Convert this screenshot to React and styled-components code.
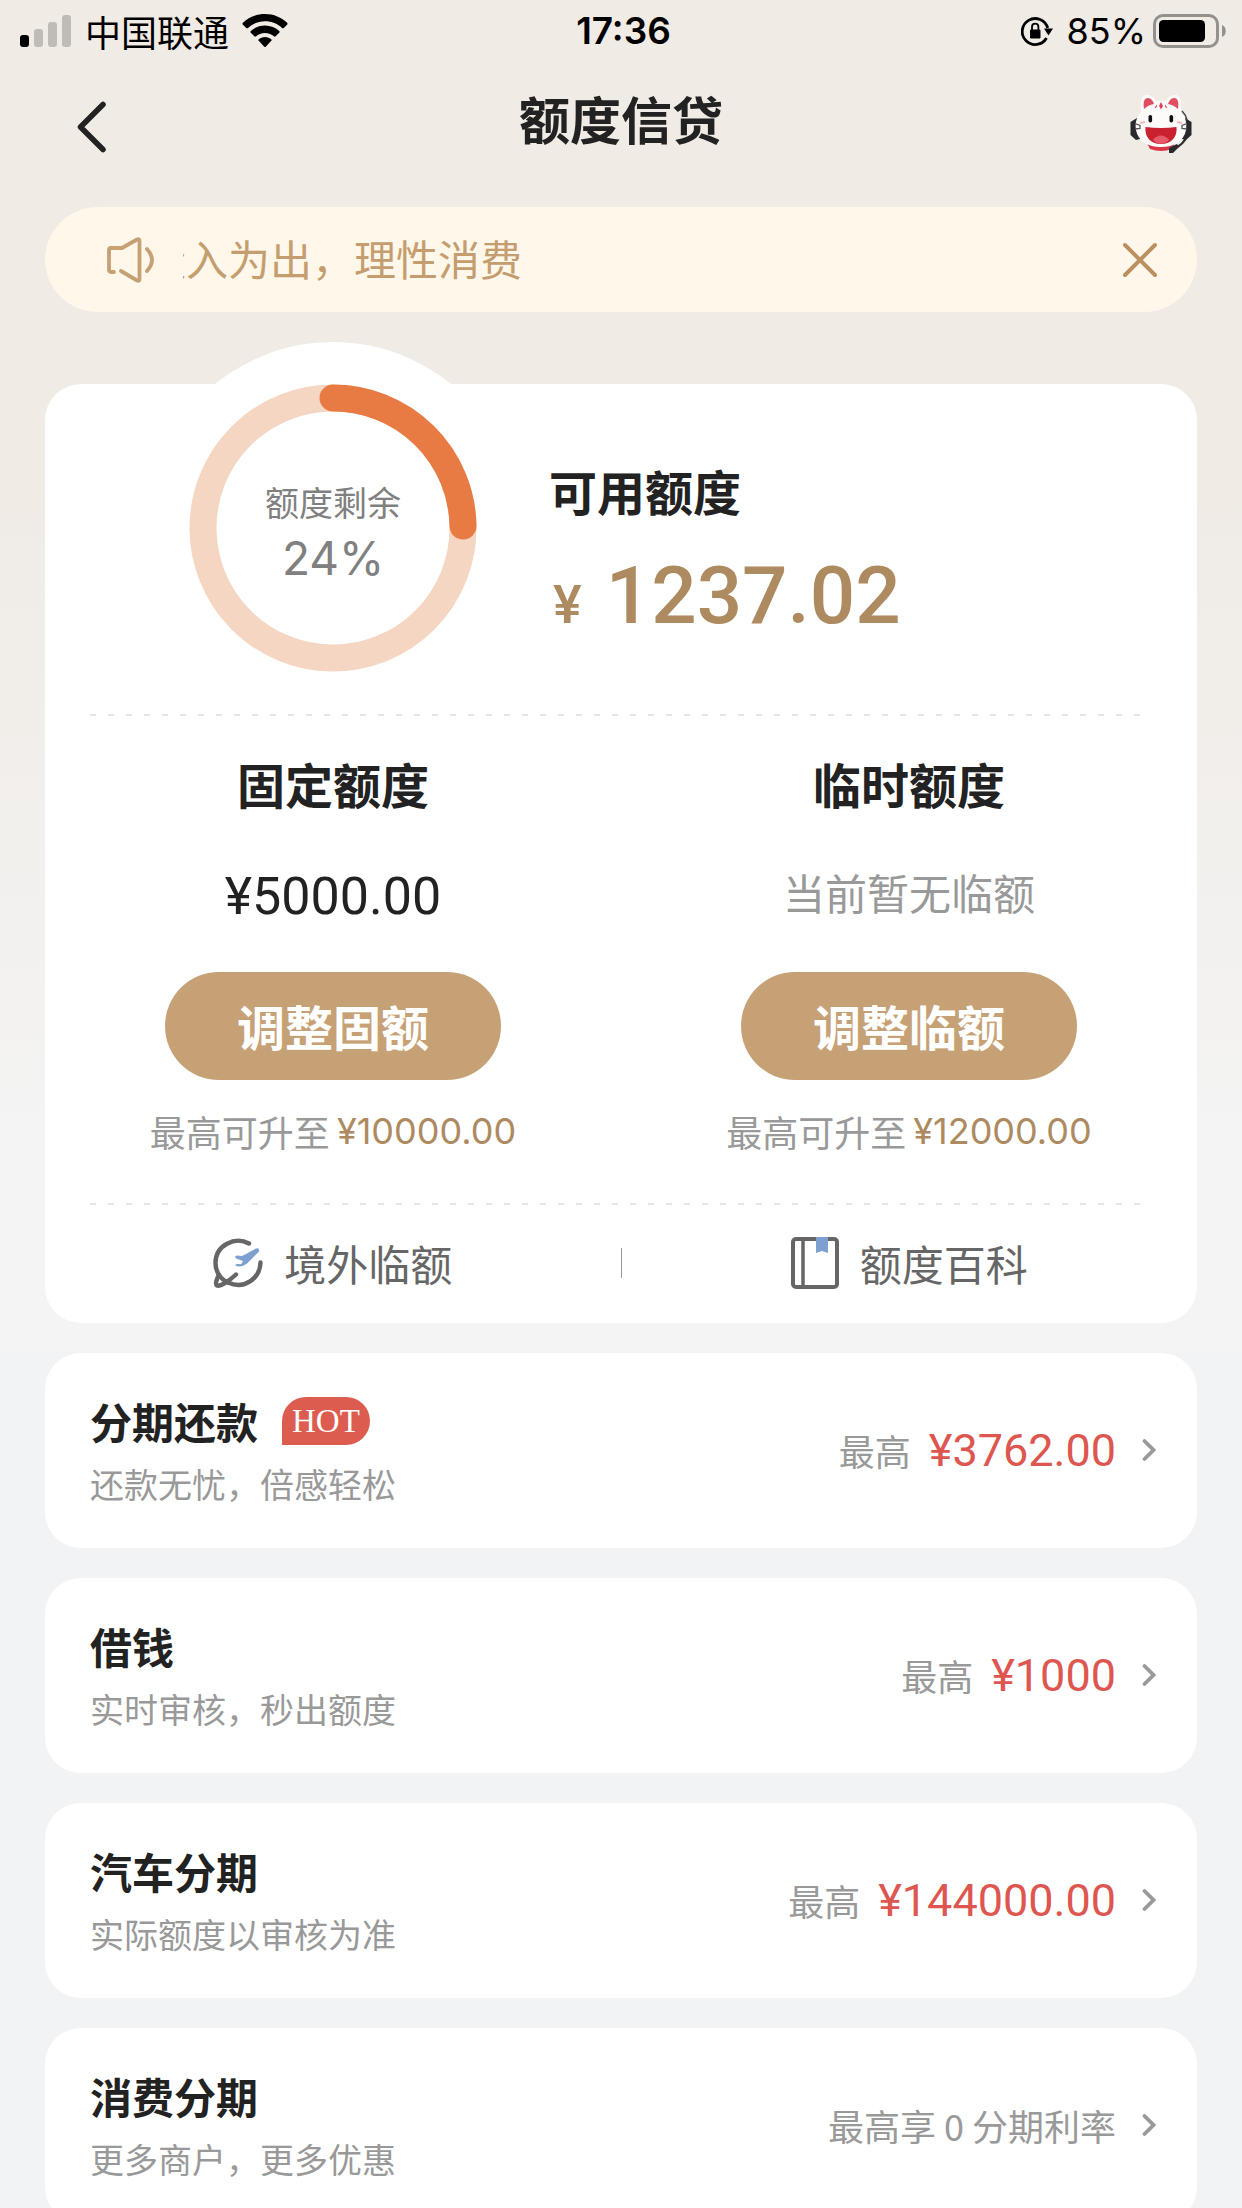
import React, { useState } from "react";
import styled, { createGlobalStyle } from "styled-components";

const PRODUCTS = [
  {
    id: "repay",
    title: "分期还款",
    desc: "还款无忧，倍感轻松",
    hot: true,
    prefix: "最高",
    amount: "¥3762.00",
  },
  {
    id: "loan",
    title: "借钱",
    desc: "实时审核，秒出额度",
    prefix: "最高",
    amount: "¥1000",
  },
  {
    id: "car",
    title: "汽车分期",
    desc: "实际额度以审核为准",
    prefix: "最高",
    amount: "¥144000.00",
  },
  {
    id: "shopping",
    title: "消费分期",
    desc: "更多商户，更多优惠",
    prefix: "最高享 0 分期利率",
  },
];

const LIMITS = [
  {
    id: "fixed",
    title: "固定额度",
    value: "¥5000.00",
    action: "调整固额",
    max: "¥10000.00",
  },
  {
    id: "temp",
    title: "临时额度",
    empty: "当前暂无临额",
    action: "调整临额",
    max: "¥12000.00",
  },
];

const SignalIcon = () => (
  <svg width="52" height="32" viewBox="0 0 52 32">
    <rect x="0" y="20" width="9" height="12" rx="3" fill="#000" />
    <rect x="14" y="14" width="9" height="18" rx="3" fill="#bfbbb6" />
    <rect x="28" y="7" width="9" height="25" rx="3" fill="#bfbbb6" />
    <rect x="42" y="0" width="9" height="32" rx="3" fill="#bfbbb6" />
  </svg>
);

const WifiIcon = () => (
  <svg width="46" height="34" viewBox="0 0 46 34">
    <path d="M23 0C14.3 0 6.400 3.400.6 9l-.1 1.200 4 4 1.200 0C10.200 9.900 16.300 7.300 23 7.300s12.800 2.600 17.300 6.900l1.200 0 4-4-.1-1.200C39.600 3.400 31.700 0 23 0z" />
    <path d="M23 11.500c-5.600 0-10.700 2.200-14.500 5.700l0 1.200 4.100 4.100 1.200 0c2.500-2.200 5.700-3.600 9.200-3.600s6.700 1.400 9.200 3.600l1.200 0 4.100-4.100 0-1.200c-3.800-3.500-8.900-5.700-14.500-5.700z" />
    <path d="M23 23c-2.500 0-4.700.9-6.500 2.400l0 1.200 6 6.400 1 0 6-6.400 0-1.200C27.700 23.900 25.500 23 23 23z" />
  </svg>
);

const LockIcon = () => (
  <svg width="32" height="34" viewBox="0 0 32 34" fill="none">
    <path d="M25.500 24A13 13 0 1 1 26.700 14" stroke="#000" strokeWidth="2.800" />
    <path d="M23 14.500h9l-4.500 7z" fill="#000" />
    <rect x="9" y="15.500" width="10.500" height="9" rx="1.200" fill="#000" />
    <path d="M11 16v-3.100a3.200 3.200 0 0 1 6.400 0V16" stroke="#000" strokeWidth="1.800" />
  </svg>
);

const BatteryIcon = () => (
  <svg width="74" height="34" viewBox="0 0 74 34" fill="none">
    <rect x="1.500" y="1.500" width="63" height="31" rx="8.500" stroke="#94908c" strokeWidth="3" />
    <rect x="6" y="6" width="46" height="22" rx="4.500" fill="#000" />
    <path d="M69 11c5 1.500 5 10.500 0 12z" fill="#94908c" />
  </svg>
);

const BackIcon = () => (
  <svg width="30" height="52" viewBox="0 0 30 52" fill="none">
    <path
      d="M26 3.500L3.500 26 26 48.500"
      stroke="#222"
      strokeWidth="5.500"
      strokeLinecap="round"
      strokeLinejoin="round"
    />
  </svg>
);

const MascotIcon = () => (
  <svg width="64" height="60" viewBox="0 0 64 60">
    <path d="M8 24L1.500 28v13L7 46l4-1z" fill="#292a2d" />
    <path d="M56 24l6.500 4v13L57 46l-4-1z" fill="#292a2d" />
    <path d="M53 17q4 4 5 9" fill="none" stroke="#444" strokeWidth="1.500" />
    <path d="M18 49h28l-3 6q-11 4-22 0z" fill="#d93649" />
    <path
      d="M12 18C11 8 12 1 18 1c4 0 7 2 9 6q5-1 10 0c2-4 5-6 9-6 6 0 7 7 6 17 5 6 6 11 5 18-2 11-12 17-25 17S9 47 7 36c-1-7 0-12 5-18z"
      fill="#fdfbfa"
    />
    <path d="M15 15c-1-7 0-11 4-11 3 0 5 3 6 6q-6 1-10 5z" fill="#e04f61" />
    <path d="M49 15c1-7 0-11-4-11-3 0-5 3-6 6q6 1 10 5z" fill="#e04f61" />
    <path
      d="M32 8l2 4-2 3.500-2-3.500zM27.500 10.500l.5 2.500-2.500 1.500zM36.500 10.500l-.5 2.500 2.500 1.500z"
      fill="#df4254"
    />
    <rect x="19.500" y="21" width="3.600" height="7.500" rx="1.800" fill="#111" />
    <rect x="40.500" y="21" width="3.600" height="7.500" rx="1.800" fill="#111" />
    <path d="M11 29l5-1M48 28l5 1" stroke="#f6b6bc" strokeWidth="2" />
    <path d="M6 29.500l5 2v3l-5 .5M58 29.500l-5 2v3l5 .5" fill="none" stroke="#555" strokeWidth="1.300" />
    <path d="M16.500 33q15.500 2 31 0c1 10-5 17-15.500 17s-16.500-7-15.500-17z" fill="#c9222e" />
    <path d="M24 46c4-6 12-6 16 0-5 5-11 5-16 0z" fill="#e5596a" />
    <path d="M58 42C55 49 51 52 46 54" fill="none" stroke="#292a2d" strokeWidth="2" />
    <path d="M40 54l8-4 2 3-6 6h-4z" fill="#292a2d" />
  </svg>
);

const SpeakerIcon = () => (
  <svg width="48" height="46" viewBox="0 0 48 46" fill="none">
    <path
      d="M7 35H4q-2 0-2-2V13q0-2 2-2h11L30 2.500q2.500-1 2.500 1.500v38q0 2.500-2.500 1.500L14 34"
      stroke="#c7a176"
      strokeWidth="3.800"
      strokeLinecap="round"
      strokeLinejoin="round"
    />
    <path d="M40 12q10 11 0 22" stroke="#c7a176" strokeWidth="3.800" strokeLinecap="round" />
  </svg>
);

const CloseIcon = () => (
  <svg width="36" height="36" viewBox="0 0 36 36" fill="none">
    <path d="M3 3l30 30M33 3L3 33" stroke="#bb9162" strokeWidth="4" strokeLinecap="round" />
  </svg>
);

const AbroadIcon = () => (
  <svg width="50" height="50" viewBox="0 0 50 50" fill="none">
    <g stroke="#666" strokeWidth="4.400" strokeLinecap="round" strokeLinejoin="round">
      <path d="M36 5.500C22-2 2.500 7 2.500 25c0 5 1.500 9 4 13" />
      <path d="M47.500 24.500C47 40 32 52 15 44.500" />
      <path d="M6 37c-2.500 4-4 9-2 10.500C7 49 16 43 23 36.500" />
      <path d="M6.500 38q3 4 8.500 6.500" />
    </g>
    <path
      d="M33 16l9-5c3-2 5.500 1 3.500 3L34 25.500q-5 4-11 2.500-1.500-1.500 1-2h4.500l1.500-3-7-2.500q-2-2.500 1-3l5 .5z"
      fill="#7ea0d0"
    />
  </svg>
);

const BookIcon = () => (
  <svg width="48" height="52" viewBox="0 0 48 52" fill="none">
    <rect x="2" y="2" width="44" height="48" rx="3" stroke="#666" strokeWidth="4" />
    <path d="M12 2v48" stroke="#666" strokeWidth="3.500" />
    <path d="M25 0h12v16l-6-2-6 2z" fill="#7ea0d0" />
  </svg>
);

const ArrowIcon = () => (
  <svg width="14" height="24" viewBox="0 0 14 24" fill="none">
    <path d="M2.500 3l9 9-9 9" stroke="#999" strokeWidth="3.800" strokeLinecap="round" />
  </svg>
);

const QuotaRing = ({ ratio, label, percent }) => {
  const radius = 130;
  const length = 2 * Math.PI * radius;

  return (
    <RingWrapper>
      <RingSvg viewBox="0 0 372 372">
        <circle cx="186" cy="186" r={radius} stroke="#f5d6c3" />
        <circle
          cx="186"
          cy="186"
          r={radius}
          stroke="#e77b43"
          strokeLinecap="round"
          strokeDasharray={`${length * ratio} ${length}`}
          transform="rotate(-90 186 186)"
        />
      </RingSvg>
      <RingText>
        <RingLabel>{label}</RingLabel>
        <RingValue>{percent}</RingValue>
      </RingText>
    </RingWrapper>
  );
};

const Limit = ({ title, value, empty, action, max }) => (
  <LimitColumn>
    <Heading>{title}</Heading>
    {value ? <LimitValue>{value}</LimitValue> : <LimitEmpty>{empty}</LimitEmpty>}
    <AdjustBtn type="button">{action}</AdjustBtn>
    <LimitHint>
      最高可升至<HintAmount>{max}</HintAmount>
    </LimitHint>
  </LimitColumn>
);

const Product = ({ title, desc, hot, prefix, amount }) => (
  <ProductCard href="#">
    <ProductInfo>
      <ProductTitle>
        {title}
        {hot && <HotTag>HOT</HotTag>}
      </ProductTitle>
      <ProductDesc>{desc}</ProductDesc>
    </ProductInfo>
    <ProductOffer>
      {prefix}
      {amount && <ProductAmount>{amount}</ProductAmount>}
    </ProductOffer>
    <ArrowIcon />
  </ProductCard>
);

const App = () => {
  const [notice, setNotice] = useState(true);

  return (
    <Page>
      <GlobalStyle />
      <StatusBar>
        <StatusGroup>
          <SignalIcon />
          <span>中国联通</span>
          <WifiIcon />
        </StatusGroup>
        <Clock>17:36</Clock>
        <StatusGroup $end>
          <LockIcon />
          <Battery>
            <span>85%</span>
            <BatteryIcon />
          </Battery>
        </StatusGroup>
      </StatusBar>

      <NavBar>
        <BackBtn type="button" aria-label="返回">
          <BackIcon />
        </BackBtn>
        <NavTitle>额度信贷</NavTitle>
        <IconBtn type="button" aria-label="客服">
          <MascotIcon />
        </IconBtn>
      </NavBar>

      <Main>
        {notice && (
          <Notice>
            <SpeakerIcon />
            <Ticker>
              <TickerText $scrolled={39}>量入为出，理性消费</TickerText>
            </Ticker>
            <IconBtn type="button" aria-label="关闭" onClick={() => setNotice(false)}>
              <CloseIcon />
            </IconBtn>
          </Notice>
        )}

        <QuotaCard>
          <Summary>
            <QuotaRing ratio={0.2474} label="额度剩余" percent="24%" />
            <Available>
              <Heading>可用额度</Heading>
              <AvailableAmount>
                <Currency>¥</Currency>1237.02
              </AvailableAmount>
            </Available>
          </Summary>
          <Dashes />
          <Limits>
            {LIMITS.map((item) => (
              <Limit key={item.id} {...item} />
            ))}
          </Limits>
          <Dashes />
          <Shortcuts>
            <Shortcut href="#">
              <AbroadIcon />
              境外临额
            </Shortcut>
            <Divider />
            <Shortcut href="#">
              <BookIcon />
              额度百科
            </Shortcut>
          </Shortcuts>
        </QuotaCard>

        {PRODUCTS.map((item) => (
          <Product key={item.id} {...item} />
        ))}
      </Main>
    </Page>
  );
};

const GlobalStyle = createGlobalStyle`
  * {
    box-sizing: border-box;
  }
  body {
    margin: 0;
    background-color: #f2f3f5;
    font-family: "Noto Sans CJK SC", sans-serif;
    color: #222;
  }
  svg {
    display: block;
    flex-shrink: 0;
  }
  a {
    color: inherit;
    text-decoration: none;
  }
  button {
    padding: 0;
    border: none;
    background: none;
    font-family: inherit;
    cursor: pointer;
  }
`;

const Page = styled.div`
  display: flex;
  flex-direction: column;
  height: 100vh;
  overflow: hidden;
  background: linear-gradient(#f0ebe5 500px, #f4f4f4 1150px, #f4f4f4 1352px, #f2f3f5 1352px);
`;

const StatusBar = styled.header`
  display: grid;
  grid-template-columns: 1fr auto 1fr;
  align-items: center;
  height: 61px;
  padding: 0 15px 0 20px;
  font-size: 36px;
  line-height: 60px;
  color: #000;
`;

const StatusGroup = styled.div`
  display: flex;
  align-items: center;
  justify-content: ${(props) => (props.$end ? "flex-end" : "flex-start")};
  gap: 13px;
`;

const Battery = styled.div`
  display: flex;
  align-items: center;
  gap: 7px;
  font-family: Inter, sans-serif;
`;

const Clock = styled.time`
  font-family: Inter, sans-serif;
  font-size: 37px;
  font-weight: 600;
`;

const NavBar = styled.nav`
  display: grid;
  grid-template-columns: 1fr auto 1fr;
  align-items: center;
  height: 125px;
  padding: 0 49px;
`;

const NavTitle = styled.h1`
  margin: 0;
  padding-bottom: 12px;
  font-size: 51px;
  line-height: 72px;
  font-weight: 600;
`;

const IconBtn = styled.button`
  display: flex;
  justify-self: end;
`;

const BackBtn = styled(IconBtn)`
  justify-self: start;
  padding: 6px 0 0 28px;
`;

const Main = styled.main`
  flex: 1;
  min-height: 0;
  overflow-y: auto;
  scrollbar-width: none;
  display: flex;
  flex-direction: column;
  gap: 30px;
  padding: 21px 45px 30px;

  > * {
    flex-shrink: 0;
  }
`;

const Notice = styled.div`
  display: flex;
  align-items: center;
  height: 105px;
  margin-bottom: 42px;
  padding: 0 39px 0 62px;
  border-radius: 53px;
  background-color: #fff7e9;
  color: #c49e70;
  font-size: 42px;
  line-height: 60px;
`;

const Ticker = styled.div`
  flex: 1;
  margin-left: 28px;
  padding-bottom: 4px;
  overflow: hidden;
  white-space: nowrap;
`;

const TickerText = styled.div`
  margin-left: -${(props) => props.$scrolled}px;
`;

const QuotaCard = styled.section`
  border-radius: 36px;
  background-color: #fff;
`;

const Summary = styled.div`
  display: flex;
  align-items: center;
  gap: 30px;
  margin-top: -42px; /* the ring sticks out above the card */
  padding-left: 102px;
`;

const RingWrapper = styled.div`
  display: grid;
  place-items: center;
  width: 372px;
  height: 372px;
  border-radius: 50%;
  background-color: #fff;

  > * {
    grid-area: 1 / 1;
  }
`;

const RingSvg = styled.svg`
  width: 100%;
  height: 100%;
  fill: none;
  stroke-width: 27px;
`;

const RingText = styled.div`
  padding-top: 12px;
  text-align: center;
  color: #808080;
`;

const RingLabel = styled.div`
  font-size: 34px;
  line-height: 48px;
`;

const RingValue = styled.div`
  font-family: Inter, sans-serif;
  font-size: 46px;
  line-height: 64px;
`;

const Available = styled.div`
  display: flex;
  flex-direction: column;
  gap: 28px;
  padding-top: 56px;
`;

const Heading = styled.h2`
  margin: 0;
  font-size: 48px;
  line-height: 60px;
  font-weight: 600;
`;

const AvailableAmount = styled.div`
  display: flex;
  align-items: baseline;
  gap: 24px;
  padding-left: 4px;
  font-family: Roboto, sans-serif;
  font-size: 80px;
  line-height: 96px;
  font-weight: 500;
  color: #ad8a5f;
`;

const Currency = styled.span`
  font-size: 54px;
`;

const Dashes = styled.div`
  height: 2px;
  margin: 0 45px;
  background: repeating-linear-gradient(90deg, #e6e6e6 0 6px, transparent 6px 18px);
`;

const Limits = styled.div`
  display: grid;
  grid-template-columns: 1fr 1fr;
  padding: 37px 0 48px;
`;

const LimitColumn = styled.div`
  display: flex;
  flex-direction: column;
  align-items: center;
`;

const LimitValue = styled.div`
  height: 60px;
  margin-top: 49px;
  font-family: Roboto, sans-serif;
  font-size: 52px;
  line-height: 70px;
`;

const LimitEmpty = styled(LimitValue)`
  font-family: inherit;
  font-size: 42px;
  line-height: 60px;
  color: #999;
`;

const AdjustBtn = styled.button`
  min-width: 336px;
  height: 108px;
  margin-top: 50px;
  padding-bottom: 3px;
  border-radius: 54px;
  background-color: #c7a176;
  color: #fff;
  font-size: 48px;
  font-weight: 600;
`;

const LimitHint = styled.div`
  display: flex;
  align-items: center;
  gap: 7px;
  margin-top: 27px;
  font-size: 36px;
  line-height: 48px;
  color: #999;
`;

const HintAmount = styled.span`
  font-family: Inter, sans-serif;
  color: #ad8a5f;
`;

const Shortcuts = styled.div`
  display: flex;
  align-items: center;
  height: 118px;
  padding-bottom: 3px;
`;

const Shortcut = styled.a`
  flex: 1;
  display: flex;
  align-items: center;
  justify-content: center;
  gap: 21px;
  font-size: 42px;
  line-height: 60px;
  color: #666;
`;

const Divider = styled.span`
  width: 1px;
  height: 30px;
  background-color: #999;
`;

const ProductCard = styled.a`
  display: flex;
  align-items: center;
  padding: 38px 41px 40px 45px;
  border-radius: 36px;
  background-color: #fff;
`;

const ProductInfo = styled.div`
  flex: 1;
`;

const ProductTitle = styled.h3`
  display: flex;
  align-items: center;
  gap: 24px;
  margin: 0 0 9px;
  font-size: 42px;
  line-height: 60px;
  font-weight: 600;
`;

const HotTag = styled.span`
  height: 48px;
  padding: 0 10px;
  border-radius: 24px 24px 24px 0;
  background-color: #dc5d50;
  font-family: "Liberation Serif", serif;
  font-size: 33px;
  line-height: 48px;
  font-weight: 400;
  color: #fff;
`;

const ProductDesc = styled.p`
  margin: 0;
  font-size: 34px;
  line-height: 48px;
  color: #999;
`;

const ProductOffer = styled.div`
  display: flex;
  align-items: center;
  gap: 18px;
  margin-right: 26px;
  font-size: 36px;
  line-height: 48px;
  color: #999;
`;

const ProductAmount = styled.span`
  padding-top: 3px;
  font-family: Roboto, sans-serif;
  font-size: 45px;
  line-height: 60px;
  color: #dd5650;
`;

export default App;
